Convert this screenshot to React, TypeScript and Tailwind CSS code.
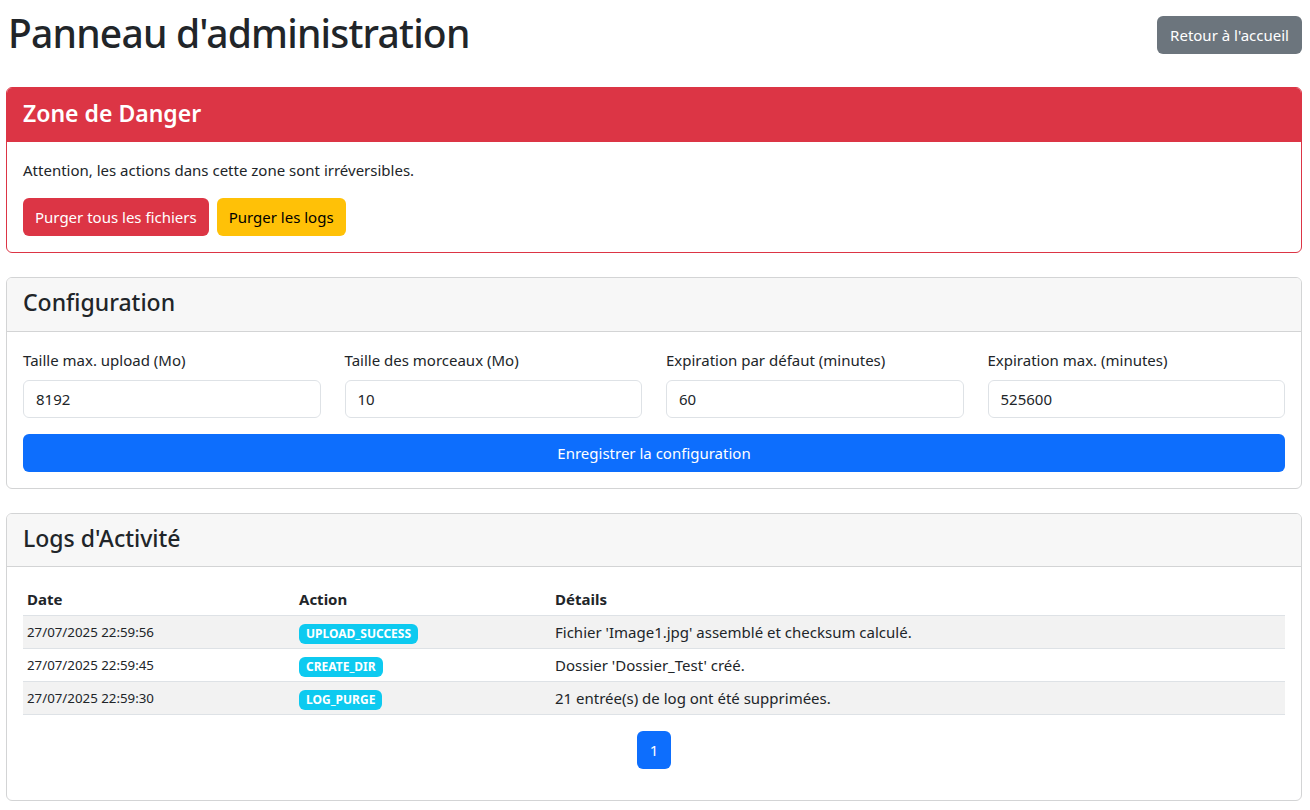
import React from 'react';

const logs = [
  { date: '27/07/2025 22:59:56', action: 'UPLOAD_SUCCESS', details: "Fichier 'Image1.jpg' assemblé et checksum calculé." },
  { date: '27/07/2025 22:59:45', action: 'CREATE_DIR', details: "Dossier 'Dossier_Test' créé." },
  { date: '27/07/2025 22:59:30', action: 'LOG_PURGE', details: '21 entrée(s) de log ont été supprimées.' },
];

const fields = [
  { label: 'Taille max. upload (Mo)', value: '8192' },
  { label: 'Taille des morceaux (Mo)', value: '10' },
  { label: 'Expiration par défaut (minutes)', value: '60' },
  { label: 'Expiration max. (minutes)', value: '525600' },
];

export default function App() {
  return (
    <div className="min-h-screen bg-white pl-[6px] pr-[8px] pb-[20px] font-['Noto_Sans',sans-serif] text-[#212529]">
      {/* En-tête */}
      <div className="flex items-start justify-between pt-[9px] mb-[30px]">
        <h1 className="ml-[2px] text-[39px] font-medium leading-[48px] tracking-[-0.8px]">Panneau d'administration</h1>
        <button className="mt-[7px] h-[38px] rounded-[6px] bg-[#6c757d] px-[13px] text-[15px] text-white">
          Retour à l'accueil
        </button>
      </div>

      {/* Zone de danger */}
      <div className="mb-[24px] overflow-hidden rounded-[6px] border border-[#dc3545]">
        <div className="flex h-[54px] items-center bg-[#dc3545] px-[16px] pb-[4px]">
          <h4 className="text-[23px] font-semibold text-white">Zone de Danger</h4>
        </div>
        <div className="p-[16px]">
          <p className="mb-[16px] text-[15px] leading-[24px]">Attention, les actions dans cette zone sont irréversibles.</p>
          <div className="flex gap-[8px]">
            <button className="h-[38px] rounded-[6px] bg-[#dc3545] px-[12px] text-[15px] text-white">Purger tous les fichiers</button>
            <button className="h-[38px] rounded-[6px] bg-[#ffc107] px-[12px] text-[15px] text-black">Purger les logs</button>
          </div>
        </div>
      </div>

      {/* Configuration */}
      <div className="mb-[24px] overflow-hidden rounded-[6px] border border-[#d3d4d5]">
        <div className="flex h-[54px] items-center border-b border-[#d3d4d5] bg-[#f7f7f7] px-[16px] pb-[4px]">
          <h4 className="text-[23px] font-medium">Configuration</h4>
        </div>
        <div className="p-[16px]">
          <div className="grid grid-cols-4 gap-x-[24px]">
            {fields.map((f) => (
              <div key={f.label}>
                <label className="mb-[8px] block text-[15px] leading-[24px]">{f.label}</label>
                <input
                  defaultValue={f.value}
                  className="h-[38px] w-full rounded-[6px] border border-[#dee2e6] px-[12px] text-[15px] outline-none"
                />
              </div>
            ))}
          </div>
          <button className="mt-[16px] h-[38px] w-full rounded-[6px] bg-[#0d6efd] text-[15px] text-white">
            Enregistrer la configuration
          </button>
        </div>
      </div>

      {/* Logs */}
      <div className="overflow-hidden rounded-[6px] border border-[#d3d4d5]">
        <div className="flex h-[53px] items-center border-b border-[#d3d4d5] bg-[#f7f7f7] px-[16px] pb-[4px]">
          <h4 className="text-[23px] font-medium">Logs d'Activité</h4>
        </div>
        <div className="px-[16px] pt-[16px] pb-[31px]">
          <table className="mb-[16px] w-full border-collapse">
            <thead>
              <tr className="border-b border-[#dee2e6] text-left">
                <th className="w-[272px] px-[4px] py-[4px] text-[15px] font-bold leading-[24px]">Date</th>
                <th className="w-[256px] px-[4px] py-[4px] text-[15px] font-bold leading-[24px]">Action</th>
                <th className="px-[4px] py-[4px] text-[15px] font-bold leading-[24px]">Détails</th>
              </tr>
            </thead>
            <tbody>
              {logs.map((l, i) => (
                <tr key={l.date} className={`border-b border-[#dee2e6] ${i % 2 === 0 ? 'bg-[#f2f2f2]' : 'bg-white'}`}>
                  <td className="px-[4px] py-[4px] text-[13.3px] leading-[24px]">{l.date}</td>
                  <td className="px-[4px] py-[4px] leading-[24px]">
                    <span className="inline-block rounded-[6px] bg-[#0dcaf0] px-[7px] py-[3px] align-middle text-[12px] font-bold leading-[14px] text-white">
                      {l.action}
                    </span>
                  </td>
                  <td className="px-[4px] py-[4px] text-[15px] leading-[24px]">{l.details}</td>
                </tr>
              ))}
            </tbody>
          </table>
          <div className="flex justify-center">
            <button className="h-[38px] w-[34px] rounded-[6px] bg-[#0d6efd] text-[15px] text-white">1</button>
          </div>
        </div>
      </div>
    </div>
  );
}
